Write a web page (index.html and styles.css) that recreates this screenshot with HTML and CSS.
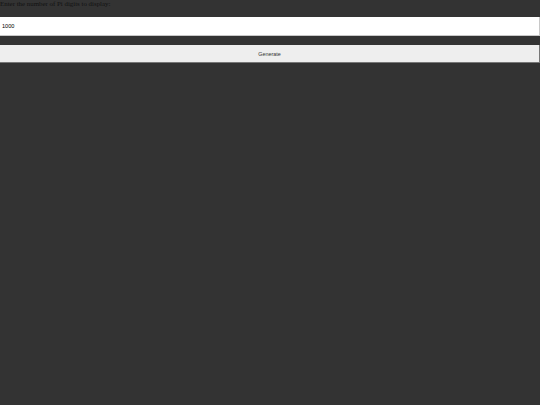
FILE: index.html
```html
<!DOCTYPE html>
<html>
<head>
<meta charset="utf-8">
<link rel="stylesheet" href="styles.css">
</head>
<body>
<div class="app">
  <label class="prompt" for="digits">Enter the number of Pi digits to display:</label>
  <input class="digits" id="digits" type="text" value="1000">
  <button class="generate">Generate</button>
</div>
</body>
</html>
```
FILE: styles.css
```css
html, body {
  margin: 0;
  padding: 0;
  background: #333333;
  height: 100%;
}
.app {
  display: flex;
  flex-direction: column;
}
.prompt {
  font-family: "Liberation Serif", serif;
  font-size: 6.9px;
  line-height: 8px;
  color: #111111;
  display: block;
}
.digits {
  box-sizing: border-box;
  margin: 9px 0 0 0;
  width: 100%;
  height: 19px;
  padding: 0 2px;
  border: none;
  border-bottom: 1px solid #c8c8c8;
  border-right: 1px solid #c8c8c8;
  background: #ffffff;
  font-family: "Liberation Sans", sans-serif;
  font-size: 5.6px;
  color: #000;
  outline: none;
}
.generate {
  box-sizing: border-box;
  margin: 9px 0 0 0;
  width: 100%;
  height: 18px;
  padding: 0;
  border: none;
  border-bottom: 1px solid #777;
  border-right: 1px solid #777;
  background: #eeeeee;
  font-family: "Liberation Sans", sans-serif;
  font-size: 5.4px;
  color: #333;
}
```
